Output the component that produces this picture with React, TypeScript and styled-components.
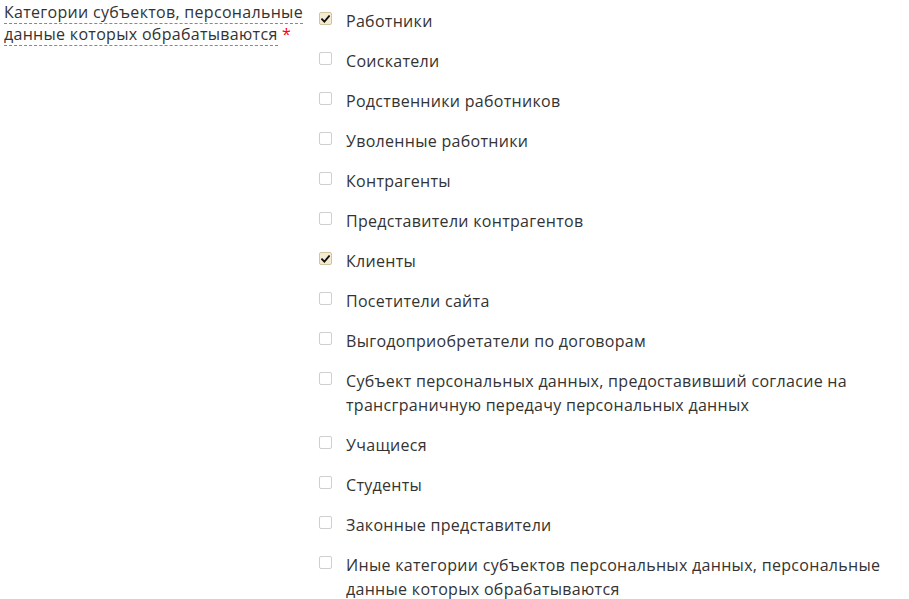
import React from "react";
import styled, { createGlobalStyle } from "styled-components";

const Global = createGlobalStyle`
  html, body { margin: 0; padding: 0; background: #fff; }
  body {
    font-family: "Open Sans", "Noto Sans", sans-serif;
    font-size: 16px;
    letter-spacing: 0.3px;
    color: #333;
  }
`;

const Row = styled.div`
  display: flex;
  align-items: flex-start;
  padding: 0 10px 0 4px;
`;

const LabelCol = styled.div`
  width: 305px;
  flex-shrink: 0;
  padding-top: 1px;
  line-height: 22px;
`;

const LabelText = styled.span`
  border-bottom: 1px dashed #888;
`;

const Star = styled.span`
  color: #f00;
`;

const List = styled.div`
  flex: 1;
  margin-left: 10px;
  padding-top: 9px;
  display: flex;
  flex-direction: column;
  gap: 16px;
`;

const Item = styled.label`
  display: flex;
  align-items: flex-start;
  gap: 14px;
  line-height: 24px;
  cursor: pointer;
`;

const Box = styled.span<{ $checked: boolean }>`
  flex-shrink: 0;
  box-sizing: border-box;
  width: 13px;
  height: 13px;
  margin-top: 3px;
  border-radius: 2px;
  border: 1px solid ${(p) => (p.$checked ? "#d4c49e" : "#cfcfcf")};
  background: ${(p) => (p.$checked ? "#f5ebd2" : "#fff")};
  display: flex;
  align-items: center;
  justify-content: center;
`;

const Text = styled.span``;

const items: [string, boolean][] = [
  ["Работники", true],
  ["Соискатели", false],
  ["Родственники работников", false],
  ["Уволенные работники", false],
  ["Контрагенты", false],
  ["Представители контрагентов", false],
  ["Клиенты", true],
  ["Посетители сайта", false],
  ["Выгодоприобретатели по договорам", false],
  ["Субъект персональных данных, предоставивший согласие на трансграничную передачу персональных данных", false],
  ["Учащиеся", false],
  ["Студенты", false],
  ["Законные представители", false],
  ["Иные категории субъектов персональных данных, персональные данные которых обрабатываются", false],
];

const Check = () => (
  <svg width="9" height="8" viewBox="0 0 9 8">
    <path d="M1 4.2 L3.4 6.6 L8 1.2" fill="none" stroke="#111" strokeWidth="1.8" strokeLinecap="square" />
  </svg>
);

export default function App() {
  return (
    <>
      <Global />
      <Row>
        <LabelCol>
          <LabelText>Категории субъектов, персональные данные которых обрабатываются</LabelText>{" "}
          <Star>*</Star>
        </LabelCol>
        <List>
          {items.map(([t, c]) => (
            <Item key={t}>
              <Box $checked={c}>{c && <Check />}</Box>
              <Text>{t}</Text>
            </Item>
          ))}
        </List>
      </Row>
    </>
  );
}
